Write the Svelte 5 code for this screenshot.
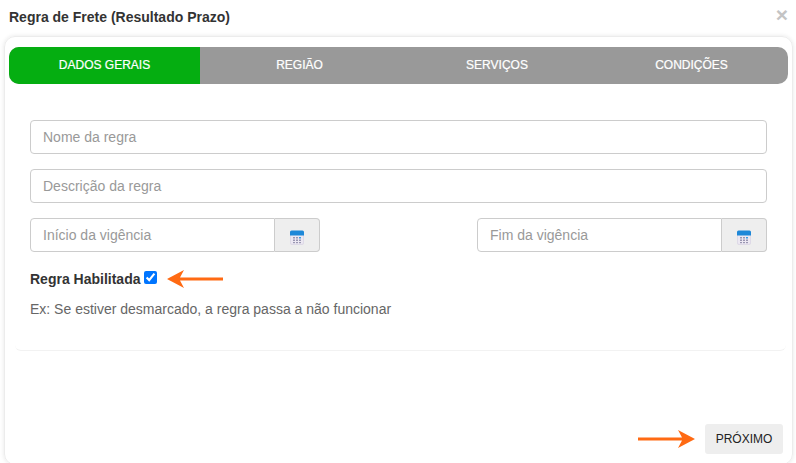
<script lang="ts">
    let ruleName = $state('');
    let description = $state('');
    let enabled = $state(true);
    const tabs = ['DADOS GERAIS', 'REGIÃO', 'SERVIÇOS', 'CONDIÇÕES'];
</script>

<div class="modal">
    <header>
        <h4>Regra de Frete (Resultado Prazo)</h4>
        <button class="close" type="button" aria-label="Fechar">×</button>
    </header>

    <div class="card">
        <nav class="tabs">
            {#each tabs as tab, i}
                <span class="tab" class:active={i === 0}>{tab}</span>
            {/each}
        </nav>

        <div class="panel">
            <input class="field" placeholder="Nome da regra" bind:value={ruleName} />
            <input class="field" placeholder="Descrição da regra" bind:value={description} />

            <div class="dates">
                {#each ['Início da vigência', 'Fim da vigência'] as ph}
                    <div class="date-group">
                        <input placeholder={ph} />
                        <span class="addon">
                            <svg width="14" height="15" viewBox="0 0 14 15">
                                <rect x="0.5" y="2" width="13" height="12.500" rx="1.500" fill="#ece8f2" stroke="#d4cfe0" stroke-width="0.6" />
                                <path d="M0 5.500V2A1.500 1.500 0 0 1 1.500 .5h11A1.500 1.500 0 0 1 14 2v3.500z" fill="#1e88d8" />
                                <g fill="#9a97b2">
                                    <rect x="3" y="7" width="2" height="1.500" />
                                    <rect x="6" y="7" width="2" height="1.500" />
                                    <rect x="9" y="7" width="2" height="1.500" fill="#3d9be0" />
                                    <rect x="3" y="9.500" width="2" height="1.500" />
                                    <rect x="6" y="9.500" width="2" height="1.500" />
                                    <rect x="9" y="9.500" width="2" height="1.500" />
                                    <rect x="3" y="12" width="2" height="1.200" />
                                    <rect x="6" y="12" width="2" height="1.200" />
                                    <rect x="9" y="12" width="2" height="1.200" />
                                </g>
                            </svg>
                        </span>
                    </div>
                {/each}
            </div>

            <div class="check-row">
                <label for="enabled">Regra Habilitada</label>
                <input id="enabled" type="checkbox" bind:checked={enabled} />
                <svg class="arrow left" width="56" height="18" viewBox="0 0 56 18">
                    <path d="M0 9 L17 0 L13 7.500 H56 V10.500 H13 L17 18z" fill="#ff6a13" />
                </svg>
            </div>
            <p class="hint">Ex: Se estiver desmarcado, a regra passa a não funcionar</p>
        </div>

        <footer>
            <svg class="arrow" width="57" height="18" viewBox="0 0 57 18">
                <path d="M57 9 L40 0 L44 7.500 H0 V10.500 H44 L40 18z" fill="#ff6a13" />
            </svg>
            <button class="next" type="button">PRÓXIMO</button>
        </footer>
    </div>
</div>

<style>
    :global(body) {
        background: #fff;
        font-family: "Liberation Sans", Arial, sans-serif;
    }

    .modal {
        width: 796px;
        height: 463px;
        display: flex;
        flex-direction: column;
        overflow: hidden;
    }

    header {
        height: 36px;
        flex: none;
        display: flex;
        justify-content: space-between;
        padding: 0 8px 0 9px;
    }

    h4 {
        margin: 9px 0 0;
        font-size: 14px;
        line-height: 17px;
        font-weight: 700;
        color: #333;
    }

    .close {
        border: 0;
        background: none;
        padding: 0;
        margin: 4px 0 0;
        height: 22px;
        font: 700 21px/22px "Liberation Sans", Arial, sans-serif;
        color: #c4c4c4;
    }

    .card {
        flex: 1;
        margin: 0 3px -2px 4px;
        padding: 10px 4px 10px 4px;
        border: 1px solid #ececec;
        border-radius: 11px;
        box-shadow: 0 0 4px rgba(0, 0, 0, 0.1);
        display: flex;
        flex-direction: column;
    }

    .tabs {
        display: grid;
        grid-template-columns: 191px 199px 196px 1fr;
        height: 37px;
        background: #999;
        border-radius: 10px;
        overflow: hidden;
    }

    .tab {
        font: 12px/37px "Liberation Sans", Arial, sans-serif;
        -webkit-text-stroke: 0.2px #fff;
        color: #fff;
        text-align: center;
    }

    .active {
        background: #05ae11;
    }

    .panel {
        margin: 0 2px 0 6px;
        height: 267px;
        box-sizing: border-box;
        padding: 36px 19px 0 15px;
        border-bottom: 1px solid #f2f2f2;
        border-radius: 0 0 6px 6px;
        display: flex;
        flex-direction: column;
        gap: 15px;
    }

    input:not([type]) {
        box-sizing: border-box;
        height: 34px;
        min-width: 0;
        padding: 0 12px;
        border: 1px solid #ccc;
        border-radius: 4px;
        font: 14px "Liberation Sans", Arial, sans-serif;
        color: #555;
        outline: none;
    }

    input::placeholder {
        color: #999;
        opacity: 1;
    }

    .dates {
        display: flex;
        justify-content: space-between;
    }

    .date-group {
        width: 290px;
        display: flex;
    }

    .date-group input {
        flex: 1;
        border-radius: 4px 0 0 4px;
    }

    .addon {
        box-sizing: border-box;
        width: 45px;
        height: 34px;
        background: #eee;
        border: 1px solid #ccc;
        border-left: 0;
        border-radius: 0 4px 4px 0;
        display: flex;
        align-items: center;
        justify-content: center;
        padding-top: 4px;
    }

    .check-row {
        display: flex;
        align-items: center;
        height: 16px;
        margin-top: 4px;
    }

    .check-row label {
        font-size: 14px;
        font-weight: 700;
        color: #333;
    }

    .check-row input {
        width: 13px;
        height: 13px;
        margin: 0 0 4px 4px;
    }

    .arrow.left {
        margin: 0 0 0 10px;
    }

    .hint {
        margin: -1px 0 0;
        font-size: 14px;
        line-height: 17px;
        color: #666;
    }

    footer {
        margin-top: auto;
        display: flex;
        align-items: center;
        justify-content: flex-end;
        gap: 10px;
        padding-right: 5px;
    }

    .next {
        width: 78px;
        height: 30px;
        border: 0;
        border-radius: 3px;
        background: #eee;
        font: 12px "Liberation Sans", Arial, sans-serif;
        color: #222;
        padding: 0;
    }
</style>
